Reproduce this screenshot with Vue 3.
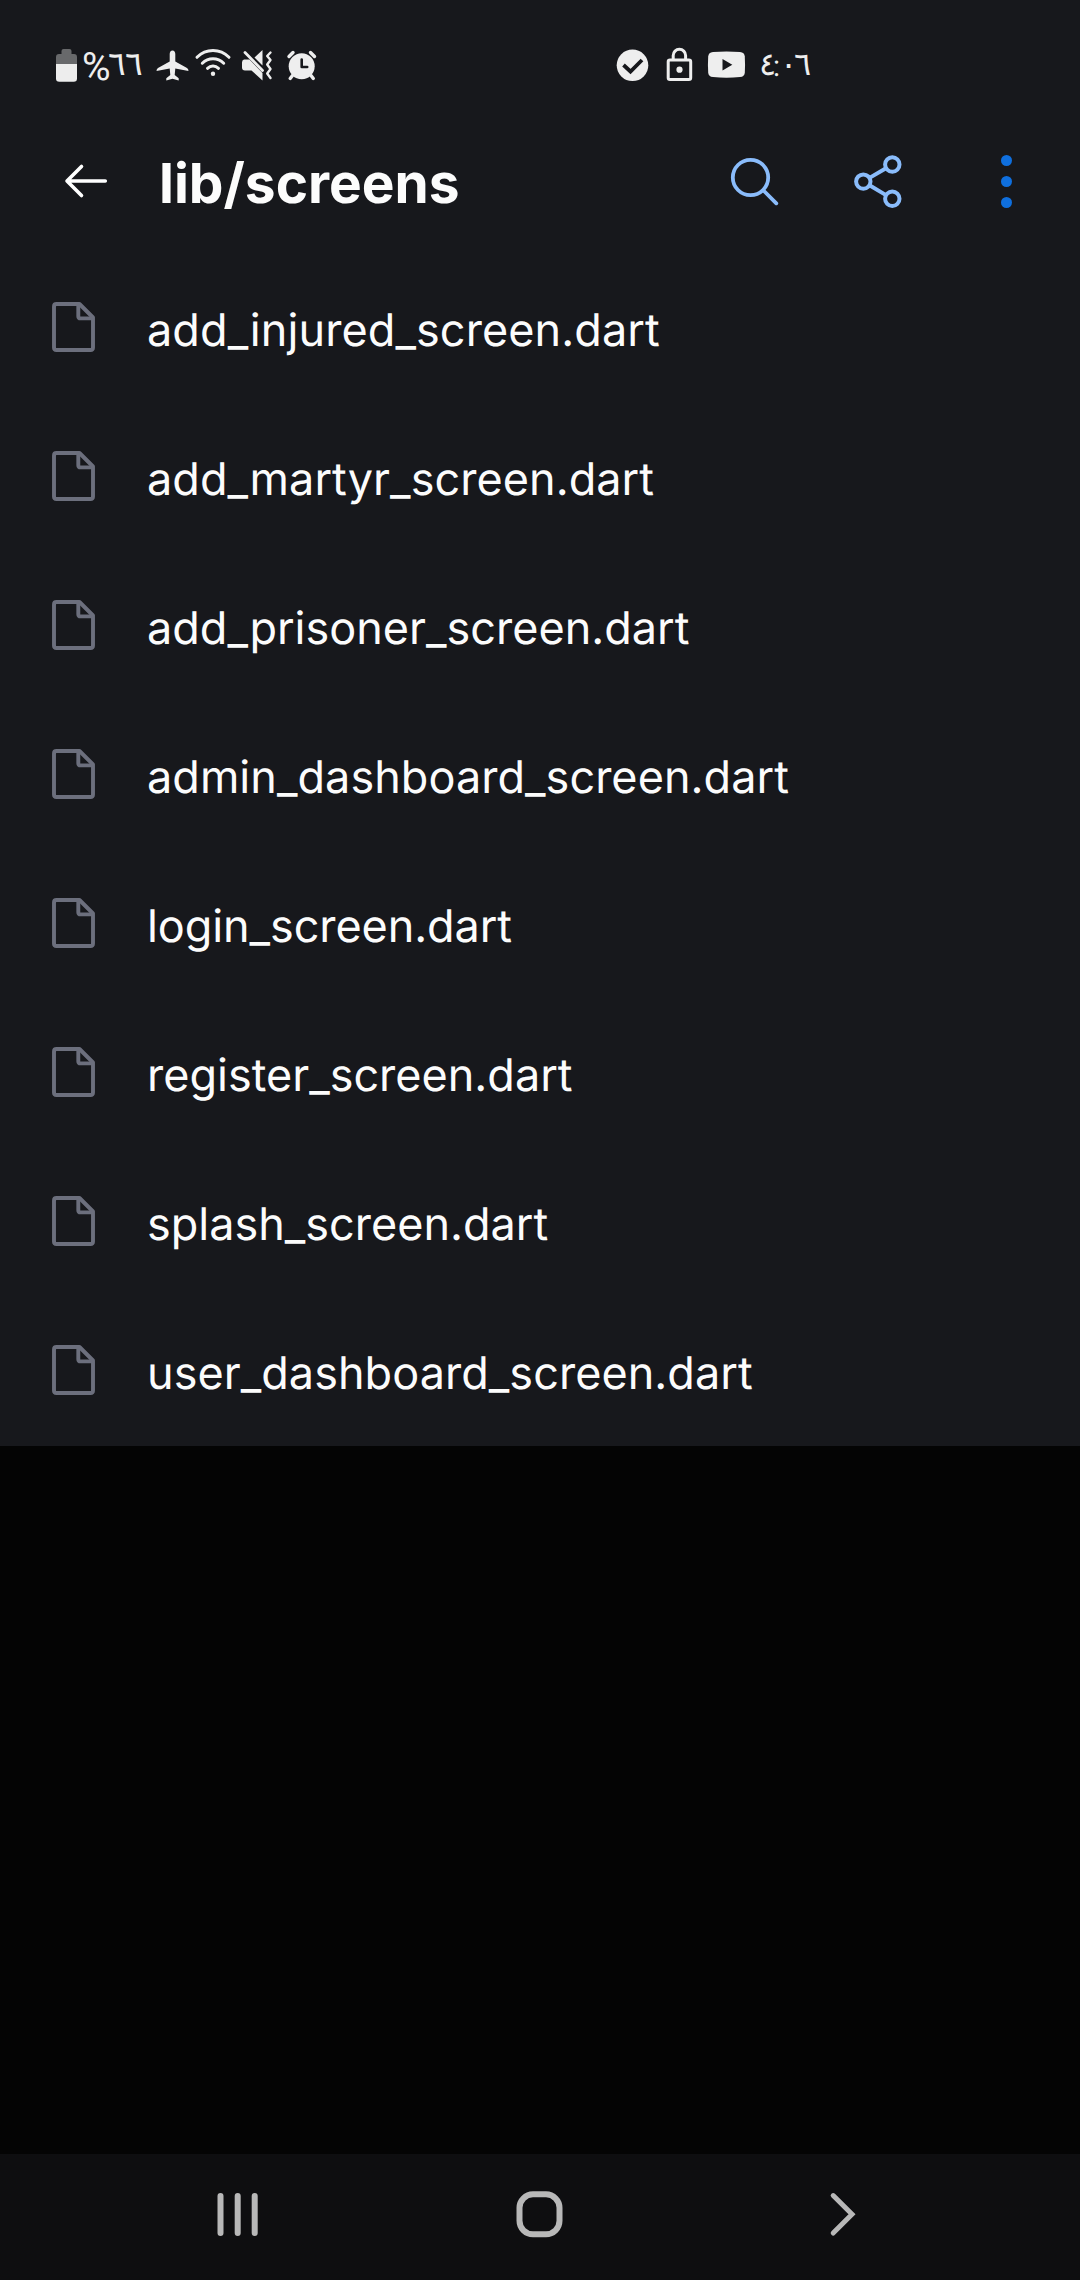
<script setup>
const files = [
  { name: 'add_injured_screen.dart', tracking: 0.09 },
  { name: 'add_martyr_screen.dart', tracking: 0.05 },
  { name: 'add_prisoner_screen.dart', tracking: 0 },
  { name: 'admin_dashboard_screen.dart', tracking: 0.04 },
  { name: 'login_screen.dart', tracking: -0.08 },
  { name: 'register_screen.dart', tracking: 0 },
  { name: 'splash_screen.dart', tracking: 0 },
  { name: 'user_dashboard_screen.dart', tracking: 0.04 },
]
</script>

<template>
  <div class="phone">
    <div class="status">
      <svg class="battery" width="21" height="40" viewBox="0 0 21 40">
        <path d="M0 19v-7q0-3 3-3h2.500V6q0-2 2-2h6q2 0 2 2v3H18q3 0 3 3v7z" fill="#68696b" />
        <path d="M0 19h21v14.500q0 3.300-3.300 3.300H3.300Q0 36.800 0 33.500z" fill="#ededed" />
      </svg>
      <div class="percent">%</div>
      <div class="level"><span>٦</span><span>٦</span></div>
      <svg class="plane" width="32" height="40" viewBox="0 0 32 40">
        <path d="M15.500 5.500c1.800 0 2.800 1.800 2.800 3.500v7.500L30 23q1.500 1 1.500 3l-13.200-2.500-.6 6.500 4 3.300V35.500l-6.200-1.700-6.200 1.700v-2.200l4-3.300-.6-6.500L-.5 26q0-2 1.500-3l11.700-6.500V9c0-1.700 1-3.500 2.800-3.500z" fill="#eee" />
      </svg>
      <svg class="wifi" width="36" height="40" viewBox="0 0 36 40" fill="none" stroke="#eee" stroke-width="3" stroke-linecap="round">
        <path d="M2 12.300C11 3.200 25 3.200 34 12.300M7.300 18.200c6-6 15.400-6 21.400 0M12.500 23.300c3.200-3 7.800-3 11 0" />
        <circle cx="18" cy="28.700" r="2.200" fill="#eee" stroke="none" />
      </svg>
      <svg class="mute" width="30" height="40" viewBox="0 0 30 40">
        <path d="M2 14.500h5.500L20.500 28v7.500L9.500 25.500H3q-3 0-3-3v-5q0-2.500 2-3zM12.500 12.500l8-7.500v15.500z" fill="#eee" />
        <path d="M3 7.500l17.500 18" stroke="#eee" stroke-width="2.800" stroke-linecap="round" />
        <path d="M28.500 7.500l-3.300 3.500 3.300 4-3.300 4.500 3.300 4.500-3.300 4.500 3.300 4.500" fill="none" stroke="#eee" stroke-width="2.400" stroke-linecap="round" stroke-linejoin="round" />
      </svg>
      <svg class="alarm" width="30" height="40" viewBox="0 0 30 40">
        <circle cx="14.700" cy="21.200" r="13" fill="#eee" />
        <path d="M2 11.500l4-4M23.500 7.500l4 4M5.500 30.500l-2.300 3M24 30.500l2.300 3" stroke="#eee" stroke-width="3.400" stroke-linecap="round" />
        <path d="M14.700 14.500v7.500h5.500" fill="none" stroke="#17181c" stroke-width="2.600" stroke-linecap="round" stroke-linejoin="round" />
      </svg>
      <svg class="check" width="32" height="40" viewBox="0 0 32 40">
        <circle cx="15.500" cy="20.300" r="15.800" fill="#eee" />
        <path d="M6.500 20l7 6.500L25 15" fill="none" stroke="#17181c" stroke-width="3.800" />
      </svg>
      <svg class="lock" width="26" height="40" viewBox="0 0 26 40" fill="none" stroke="#eee" stroke-width="3">
        <rect x="1.200" y="15" width="22.500" height="19.600" rx="1.800" />
        <path d="M6.200 15v-4.500a6.200 6.200 0 0 1 12.400 0V15" />
        <circle cx="12.500" cy="24.700" r="3.100" fill="#eee" stroke="none" />
      </svg>
      <svg class="video" width="37" height="40" viewBox="0 0 37 40">
        <path d="M5 7.500Q18.500 6.300 32 7.500q4.500.4 4.800 4.500.5 8.200 0 16.200-.3 4-4.800 4.400-13.500 1.100-27 0Q.5 32.200.2 28.200q-.5-8.200 0-16.200Q.5 7.900 5 7.500z" transform="translate(0 -.5)" fill="#eee" />
        <path d="M14.500 14v11.400l9.800-5.700z" fill="#17181c" />
      </svg>
      <div class="clock"><span class="hour">٤</span><span class="colon">:</span><span class="zero">٠</span><span>٦</span></div>
    </div>

    <header class="bar">
      <svg class="back" width="44" height="40" viewBox="0 0 44 40" fill="none" stroke="#fff" stroke-width="3.600" stroke-linecap="round" stroke-linejoin="round">
        <path d="M16.500 5.500L2 20l14.500 14.500M3 20h37.300" />
      </svg>
      <h1>lib/screens</h1>
      <svg class="search" width="48" height="48" viewBox="0 0 48 48" fill="none" stroke="#8abcfb" stroke-width="3.800" stroke-linecap="round">
        <circle cx="19.500" cy="19.500" r="17.700" />
        <path d="M33 33l12.300 12.300" />
      </svg>
      <svg class="share" width="48" height="54" viewBox="0 0 48 54" fill="none" stroke="#8abcfb" stroke-width="4">
        <circle cx="9.300" cy="26.600" r="7.200" />
        <circle cx="38.300" cy="9.500" r="7.200" />
        <circle cx="38.300" cy="43.800" r="7.200" />
        <path d="M15.500 22.900L32 13.200M15.500 30.300L32 40.100" />
      </svg>
      <svg class="more" width="12" height="54" viewBox="0 0 12 54" fill="#0f6fde">
        <circle cx="6.500" cy="5.500" r="5.500" />
        <circle cx="6.500" cy="26.500" r="5.500" />
        <circle cx="6.500" cy="47.500" r="5.500" />
      </svg>
    </header>

    <ul class="files">
      <li v-for="file in files" :key="file.name">
        <svg width="43" height="50" viewBox="0 0 43 50" fill="none" stroke="#6c6f7d" stroke-width="3.900" stroke-linejoin="round">
          <path d="M4.500 2h23L41 15.500V45.500q0 2.500-2.500 2.500h-34Q2 48 2 45.500v-41Q2 2 4.500 2z" />
          <path d="M26.300 3v11.200q0 2.200 2.200 2.200H40" />
        </svg>
        <span :style="{ letterSpacing: file.tracking + 'px' }">{{ file.name }}</span>
      </li>
    </ul>

    <nav class="nav">
      <svg width="42" height="48" viewBox="0 0 42 48" stroke="#b8b8b8" stroke-width="6" stroke-linecap="round">
        <path d="M3.500 6v37M20.700 6v37M37.700 6v37" />
      </svg>
      <svg class="home" width="48" height="48" viewBox="0 0 48 48" fill="none" stroke="#b8b8b8" stroke-width="6">
        <rect x="4.500" y="4.300" width="40" height="40" rx="13.500" />
      </svg>
      <svg width="28" height="48" viewBox="0 0 28 48" fill="none" stroke="#b8b8b8" stroke-width="5" stroke-linecap="round">
        <path d="M5.200 5.600L24 24.300 5.200 43" />
      </svg>
    </nav>
  </div>
</template>

<style>
body {
  margin: 0;
  background: #040404;
}
</style>

<style scoped>
.phone {
  width: 1080px;
  height: 2280px;
  display: flex;
  flex-direction: column;
  background: #040404;
  color: #fcfcfc;
  font-family: Inter, sans-serif;
  text-rendering: geometricPrecision;
  overflow: hidden;
}
svg {
  display: block;
  flex: none;
  overflow: visible;
}
.status {
  height: 130px;
  padding: 45px 0 0 56px;
  box-sizing: border-box;
  display: flex;
  background: #17181c;
  color: #eee;
}
.percent,
.level,
.clock {
  flex: none;
  display: flex;
  height: 40px;
  white-space: nowrap;
}
.percent {
  width: 26px;
  margin-left: 5px;
  padding-top: 2px;
  font: 39px/40px Roboto, sans-serif;
}
.level {
  width: 37px;
  font: 33px/38px "DejaVu Sans", sans-serif;
}
.level span { width: 17px; }
.plane { margin-left: 12px; }
.wifi { margin-left: 6px; }
.mute { margin-left: 11px; }
.alarm { margin-left: 15px; }
.check { margin-left: 300px; }
.lock { margin-left: 18px; }
.video { margin-left: 15px; }
.clock {
  margin-left: 14px;
  font: 32px/39px "DejaVu Sans", sans-serif;
}
.hour { width: 14px; }
.colon {
  width: 7px;
  padding-top: 3px;
  font: 29px/39px Roboto, sans-serif;
}
.zero { width: 14px; }
.bar {
  height: 124px;
  padding-left: 65px;
  box-sizing: border-box;
  display: flex;
  align-items: flex-start;
  background: #17181c;
}
.back { margin-top: 31px; }
h1 {
  width: 569px;
  margin: 19px 0 0 50px;
  font-size: 55px;
  line-height: 70px;
  font-weight: 700;
  white-space: nowrap;
}
.search { margin: 28px 0 0 3px; }
.share { margin: 25px 0 0 75px; }
.more { margin: 25px 0 0 98px; }
.files {
  margin: 0;
  padding: 0;
  list-style: none;
  background: #17181c;
}
.files li {
  height: 149px;
  padding-left: 52px;
  box-sizing: border-box;
  display: flex;
  align-items: flex-start;
}
.files svg { margin-top: 48px; }
.files span {
  margin: 46px 0 0 52px;
  font-size: 45px;
  line-height: 60px;
  white-space: nowrap;
}
.nav {
  margin-top: auto;
  height: 126px;
  padding: 36px 0 0 217px;
  box-sizing: border-box;
  display: flex;
  background: #0e0e10;
}
.home { margin: 0 265px 0 256px; }
</style>
